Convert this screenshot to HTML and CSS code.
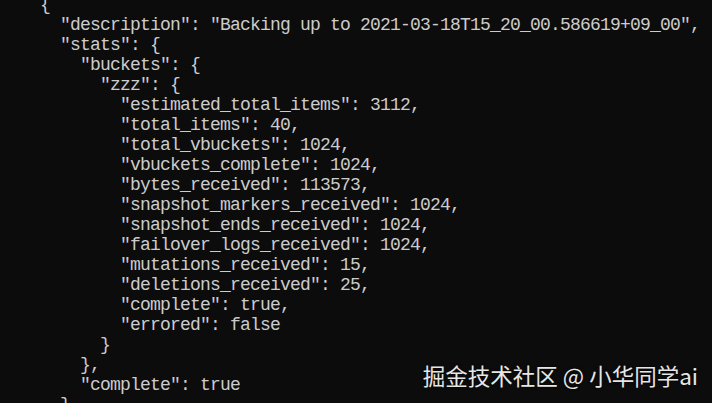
FILE: index.html
```html
<!DOCTYPE html>
<html lang="en">
<head>
<meta charset="utf-8">
<title>Backup stats</title>
<link rel="stylesheet" href="styles.css">
</head>
<body>
<main class="terminal">
<pre class="output">{
  "description": "Backing up to 2021-03-18T15_20_00.586619+09_00",
  "stats": {
    "buckets": {
      "zzz": {
        "estimated_total_items": 3112,
        "total_items": 40,
        "total_vbuckets": 1024,
        "vbuckets_complete": 1024,
        "bytes_received": 113573,
        "snapshot_markers_received": 1024,
        "snapshot_ends_received": 1024,
        "failover_logs_received": 1024,
        "mutations_received": 15,
        "deletions_received": 25,
        "complete": true,
        "errored": false
      }
    },
    "complete": true
  }
}</pre>
<div class="watermark">掘金技术社区 @ 小华同学ai</div>
</main>
</body>
</html>
```
FILE: styles.css
```css
html, body {
  margin: 0;
  padding: 0;
  background: #0c0c0c;
  height: 100%;
  overflow: hidden;
}

.terminal {
  position: relative;
  height: 403px;
  overflow: hidden;
  background: #0c0c0c;
}

.output {
  width: max-content;
  margin: -5px 0 0 0;
  padding: 0 0 0 40px;
  font-family: "Liberation Mono", "DejaVu Sans Mono", monospace;
  font-size: 18px;
  letter-spacing: -0.8px;
  line-height: 20px;
  color: #cccccc;
}

.watermark {
  position: absolute;
  right: 14px;
  bottom: 15px;
  font-family: "Noto Sans CJK SC", "Noto Sans", sans-serif;
  font-size: 22.5px;
  line-height: 26px;
  color: #e6e6e6;
  text-shadow: 0 0 3px rgba(0, 0, 0, 0.8);
}
```
